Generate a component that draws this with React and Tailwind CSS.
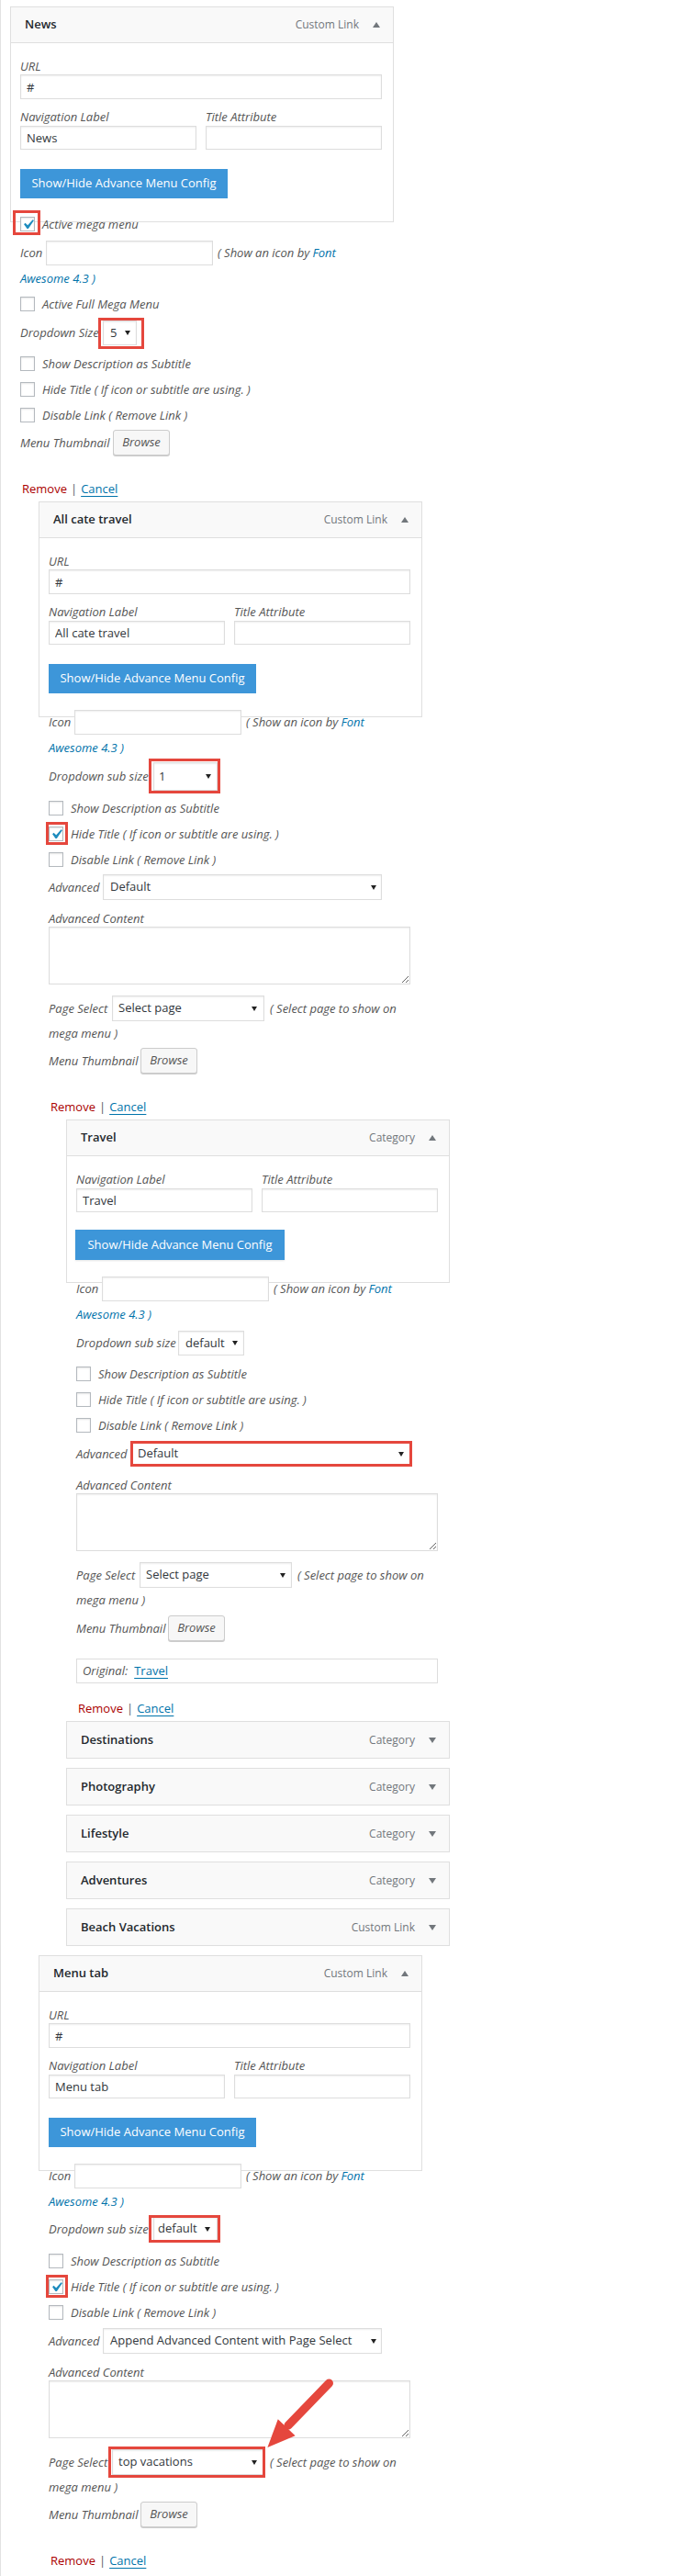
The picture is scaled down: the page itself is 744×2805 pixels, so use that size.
import React from "react";

const L = "italic text-[13px] leading-[17px] text-[#555] whitespace-nowrap";
const BLUE = "italic text-[13px] leading-[17px] text-[#0073aa] whitespace-nowrap";

function TriUp() {
  return (
    <svg width="8" height="6" viewBox="0 0 8 6" className="ml-[15px] shrink-0">
      <polygon points="0,6 4,0 8,6" fill="#72777c" />
    </svg>
  );
}
function TriDown() {
  return (
    <svg width="8" height="6" viewBox="0 0 8 6" className="ml-[15px] shrink-0">
      <polygon points="0,0 8,0 4,6" fill="#72777c" />
    </svg>
  );
}
function SelArrow() {
  return (
    <svg width="6" height="5" viewBox="0 0 6 5" className="shrink-0">
      <polygon points="0,0 6,0 3,5" fill="#222" />
    </svg>
  );
}

function Header({ title, type, open }) {
  return (
    <div
      className={
        open
          ? "h-[39px] flex items-center justify-between bg-[#f9f9f9] pl-[15px] pr-[14px] border-b border-[#dfdfdf]"
          : "h-[39px] flex items-center justify-between bg-[#f9f9f9] pl-[15px] pr-[14px]"
      }
    >
      <span className="text-[13px] font-semibold text-[#23282d]">{title}</span>
      <div className="flex items-center">
        <span className="text-[12px] text-[#72777c]">{type}</span>
        {open ? <TriUp /> : <TriDown />}
      </div>
    </div>
  );
}

function TextInput({ value, cls }) {
  return (
    <input
      readOnly
      value={value}
      className={
        "block border border-[#ddd] bg-white px-[6px] text-[13px] text-[#32373c] shadow-[inset_0_1px_2px_rgba(0,0,0,0.07)] outline-none " +
        cls
      }
    />
  );
}

function Select({ value, cls, children }) {
  return (
    <div
      className={
        "relative flex items-center justify-between border border-[#ddd] bg-white shadow-[inset_0_1px_2px_rgba(0,0,0,0.07)] text-[13px] text-[#32373c] whitespace-nowrap " +
        cls
      }
    >
      <span>{value}</span>
      <SelArrow />
      {children}
    </div>
  );
}

function Red({ pos }) {
  return <span className={"absolute border-[3px] border-[#e5473d] pointer-events-none " + pos} />;
}

function Check({ checked, hl }) {
  return (
    <span className="relative inline-block w-[16px] h-[16px] shrink-0 border border-[#b4b9be] bg-white shadow-[inset_0_1px_2px_rgba(0,0,0,0.1)]">
      {checked && (
        <svg className="absolute -left-[3px] -top-[3px]" width="21" height="21" viewBox="0 0 20 20">
          <path fill="#1e8cbe" d="M14.83 4.89l1.34.94-5.81 8.38H9.02L5.78 9.67l1.34-1.25 2.57 2.4z" />
        </svg>
      )}
      {hl && <Red pos={hl} />}
    </span>
  );
}

function CheckRow({ cls, checked, hl, children }) {
  return (
    <div className={"h-[16px] flex items-center " + cls}>
      <Check checked={checked} hl={hl} />
      <span className={L + " ml-[8px]"}>{children}</span>
    </div>
  );
}

function Browse() {
  return (
    <div className="w-[62px] h-[28px] flex items-center justify-center border border-[#ccc] bg-[#f7f7f7] shadow-[0_1px_0_#ccc] rounded-[3px] italic text-[13px] text-[#555]">
      Browse
    </div>
  );
}

function OpenBox({ title, type }) {
  return (
    <div className="w-[418px] border border-[#dfdfdf] bg-white">
      <Header title={title} type={type} open />
      <div className="pl-[10px] pr-[12px] pt-[17px] pb-[25px]">
        <div className={L}>URL</div>
        <TextInput value="#" cls="w-full h-[27px]" />
        <div className="mt-[11px] grid grid-cols-2 gap-x-[10px]">
          <div className={L}>Navigation Label</div>
          <div className={L}>Title Attribute</div>
          <TextInput value={title} cls="mt-[1px] w-full h-[26px]" />
          <TextInput value="" cls="mt-[1px] w-full h-[26px]" />
        </div>
        <button className="block mt-[21px] w-[226px] h-[32px] bg-[#3d96d9] text-white text-[13px]">
          Show/Hide Advance Menu Config
        </button>
      </div>
    </div>
  );
}

function ClosedBox({ title, type, cls }) {
  return (
    <div className={"w-[418px] border border-[#dfdfdf] " + cls}>
      <Header title={title} type={type} />
    </div>
  );
}

function IconRows({ cls }) {
  return (
    <>
      <div className={"h-[27px] flex items-center " + cls}>
        <span className={L + " w-[28px]"}>Icon</span>
        <TextInput value="" cls="w-[182px] h-[27px]" />
        <span className={L + " ml-[5px]"}>
          ( Show an icon by <span className="text-[#0073aa]">Font</span>
        </span>
      </div>
      <div className="mt-[1px] h-[27px] flex items-center">
        <span className={BLUE}>Awesome 4.3 )</span>
      </div>
    </>
  );
}

function RemoveRow({ cls }) {
  return (
    <div className={"h-[18px] flex items-center pl-[2px] text-[13px] leading-[18px] " + cls}>
      <span className="text-[#a00]">Remove</span>
      <span className="mx-[4px] text-[#50575e]">|</span>
      <span className="text-[#0073aa] underline underline-offset-[3px]">Cancel</span>
    </div>
  );
}

function AdvancedBlock({ advValue, advCls, advHl, labelW, textarea, pageValue, pageCls, pageHl, pageLabelW }) {
  return null;
}

export default function App() {
  return (
    <div className="relative w-[744px] min-h-[2805px] bg-white border-l border-[#e2e2e2] font-['Open_Sans',sans-serif] pt-[7px] pb-[4px]">
      {/* Section 1: News */}
      <div className="ml-[10px]">
        <OpenBox title="News" type="Custom Link" />
        <div className="pl-[11px]">
          <CheckRow cls="-mt-[6px]" checked hl="-left-[9px] -top-[8px] w-[30px] h-[27px]">
            Active mega menu
          </CheckRow>
          <IconRows cls="mt-[10px]" />
          <CheckRow cls="mt-[6px]">Active Full Mega Menu</CheckRow>
          <div className="mt-[10px] h-[27px] flex items-center">
            <span className={L + " w-[90px]"}>Dropdown Size</span>
            <Select value="5" cls="w-[37px] h-[27px] pl-[7px] pr-[6px]">
              <Red pos="-left-[6px] -top-[4px] w-[50px] h-[34px]" />
            </Select>
          </div>
          <CheckRow cls="mt-[12px]">Show Description as Subtitle</CheckRow>
          <CheckRow cls="mt-[12px]">Hide Title ( If icon or subtitle are using. )</CheckRow>
          <CheckRow cls="mt-[12px]">Disable Link ( Remove Link )</CheckRow>
          <div className="mt-[8px] h-[28px] flex items-center">
            <span className={L + " w-[101px]"}>Menu Thumbnail</span>
            <Browse />
          </div>
          <RemoveRow cls="mt-[27px]" />
        </div>
      </div>

      {/* Section 2: All cate travel */}
      <div className="ml-[41px] mt-[5px]">
        <OpenBox title="All cate travel" type="Custom Link" />
        <div className="pl-[11px]">
          <IconRows cls="-mt-[8px]" />
          <div className="mt-[2px] h-[31px] flex items-center">
            <span className={L + " w-[114px]"}>Dropdown sub size</span>
            <Select value="1" cls="w-[70px] h-[31px] pl-[5px] pr-[6px]">
              <Red pos="-left-[6px] -top-[5px] w-[78px] h-[38px]" />
            </Select>
          </div>
          <CheckRow cls="mt-[11px]">Show Description as Subtitle</CheckRow>
          <CheckRow cls="mt-[12px]" checked hl="-left-[4px] -top-[6px] w-[24px] h-[25px]">
            Hide Title ( If icon or subtitle are using. )
          </CheckRow>
          <CheckRow cls="mt-[12px]">Disable Link ( Remove Link )</CheckRow>
          <div className="mt-[8px] h-[28px] flex items-center">
            <span className={L + " w-[59px]"}>Advanced</span>
            <Select value="Default" cls="w-[304px] h-[28px] pl-[7px] pr-[5px]" />
          </div>
          <div className={L + " mt-[12px]"}>Advanced Content</div>
          <textarea readOnly className="block w-[394px] h-[63px] border border-[#ddd] bg-white shadow-[inset_0_1px_2px_rgba(0,0,0,0.07)] outline-none" />
          <div className="mt-[12px] h-[28px] flex items-center">
            <span className={L + " w-[69px]"}>Page Select</span>
            <Select value="Select page" cls="w-[166px] h-[28px] pl-[6px] pr-[7px]" />
            <span className={L + " ml-[6px]"}>( Select page to show on</span>
          </div>
          <div className="h-[27px] flex items-center">
            <span className={L}>mega menu )</span>
          </div>
          <div className="mt-[2px] h-[28px] flex items-center">
            <span className={L + " w-[100px]"}>Menu Thumbnail</span>
            <Browse />
          </div>
          <RemoveRow cls="mt-[27px]" />
        </div>
      </div>

      {/* Section 3: Travel */}
      <div className="ml-[71px] mt-[5px]">
        <div className="w-[418px] border border-[#dfdfdf] bg-white">
          <Header title="Travel" type="Category" open />
          <div className="pl-[10px] pr-[12px] pt-[17px] pb-[24px]">
            <div className="grid grid-cols-2 gap-x-[10px]">
              <div className={L}>Navigation Label</div>
              <div className={L}>Title Attribute</div>
              <TextInput value="Travel" cls="mt-[1px] w-full h-[26px]" />
              <TextInput value="" cls="mt-[1px] w-full h-[26px]" />
            </div>
            <button className="block mt-[19px] -ml-[1px] w-[228px] h-[33px] bg-[#3d96d9] text-white text-[13px] shadow-[0_1px_2px_rgba(0,0,0,0.1)]">
              Show/Hide Advance Menu Config
            </button>
          </div>
        </div>
        <div className="pl-[11px]">
          <IconRows cls="-mt-[7px]" />
          <div className="mt-[4px] h-[27px] flex items-center">
            <span className={L + " w-[111px]"}>Dropdown sub size</span>
            <Select value="default" cls="w-[72px] h-[27px] pl-[7px] pr-[6px]" />
          </div>
          <CheckRow cls="mt-[12px]">Show Description as Subtitle</CheckRow>
          <CheckRow cls="mt-[12px]">Hide Title ( If icon or subtitle are using. )</CheckRow>
          <CheckRow cls="mt-[12px]">Disable Link ( Remove Link )</CheckRow>
          <div className="mt-[9px] h-[28px] flex items-center">
            <span className={L + " w-[60px]"}>Advanced</span>
            <Select value="Default" cls="w-[304px] h-[28px] pl-[6px] pr-[6px]">
              <Red pos="-left-[2px] -top-[1px] w-[307px] h-[28px]" />
            </Select>
          </div>
          <div className={L + " mt-[12px]"}>Advanced Content</div>
          <textarea readOnly className="block w-[394px] h-[63px] border border-[#ddd] bg-white shadow-[inset_0_1px_2px_rgba(0,0,0,0.07)] outline-none" />
          <div className="mt-[12px] h-[28px] flex items-center">
            <span className={L + " w-[69px]"}>Page Select</span>
            <Select value="Select page" cls="w-[166px] h-[28px] pl-[6px] pr-[6px]" />
            <span className={L + " ml-[6px]"}>( Select page to show on</span>
          </div>
          <div className="h-[27px] flex items-center">
            <span className={L}>mega menu )</span>
          </div>
          <div className="mt-[3px] h-[28px] flex items-center">
            <span className={L + " w-[100px]"}>Menu Thumbnail</span>
            <Browse />
          </div>
          <div className="mt-[19px] w-[394px] h-[27px] border border-[#ddd] flex items-center pl-[6px] text-[13px]">
            <span className="italic text-[#555]">Original:</span>
            <span className="ml-[7px] text-[#0073aa] underline underline-offset-[3px]">Travel</span>
          </div>
          <RemoveRow cls="mt-[18px]" />
        </div>
        <ClosedBox title="Destinations" type="Category" cls="mt-[5px] bg-[#f9f9f9]" />
        <ClosedBox title="Photography" type="Category" cls="mt-[10px] bg-[#f9f9f9]" />
        <ClosedBox title="Lifestyle" type="Category" cls="mt-[10px] bg-[#f9f9f9]" />
        <ClosedBox title="Adventures" type="Category" cls="mt-[10px] bg-[#f9f9f9]" />
        <ClosedBox title="Beach Vacations" type="Custom Link" cls="mt-[10px] bg-[#f9f9f9]" />
      </div>

      {/* Section 4: Menu tab */}
      <div className="ml-[41px] mt-[10px]">
        <OpenBox title="Menu tab" type="Custom Link" />
        <div className="pl-[11px]">
          <IconRows cls="-mt-[8px]" />
          <div className="mt-[3px] h-[26px] flex items-center">
            <span className={L + " w-[114px]"}>Dropdown sub size</span>
            <Select value="default" cls="w-[70px] h-[26px] pl-[4px] pr-[7px]">
              <Red pos="-left-[6px] -top-[3px] w-[78px] h-[30px]" />
            </Select>
          </div>
          <CheckRow cls="mt-[14px]">Show Description as Subtitle</CheckRow>
          <CheckRow cls="mt-[12px]" checked hl="-left-[4px] -top-[6px] w-[24px] h-[25px]">
            Hide Title ( If icon or subtitle are using. )
          </CheckRow>
          <CheckRow cls="mt-[12px]">Disable Link ( Remove Link )</CheckRow>
          <div className="mt-[9px] h-[28px] flex items-center">
            <span className={L + " w-[59px]"}>Advanced</span>
            <Select value="Append Advanced Content with Page Select" cls="w-[304px] h-[28px] pl-[7px] pr-[5px]" />
          </div>
          <div className={L + " mt-[12px]"}>Advanced Content</div>
          <textarea readOnly className="block w-[394px] h-[63px] border border-[#ddd] bg-white shadow-[inset_0_1px_2px_rgba(0,0,0,0.07)] outline-none" />
          <div className="mt-[12px] h-[28px] flex items-center">
            <span className={L + " w-[69px]"}>Page Select</span>
            <Select value="top vacations" cls="w-[166px] h-[28px] pl-[6px] pr-[7px]">
              <Red pos="-left-[5px] -top-[4px] w-[171px] h-[34px]" />
            </Select>
            <span className={L + " ml-[6px]"}>( Select page to show on</span>
          </div>
          <div className="h-[27px] flex items-center">
            <span className={L}>mega menu )</span>
          </div>
          <div className="mt-[2px] h-[28px] flex items-center">
            <span className={L + " w-[100px]"}>Menu Thumbnail</span>
            <Browse />
          </div>
          <RemoveRow cls="mt-[27px]" />
        </div>
      </div>

      {/* Annotation arrow */}
      <svg className="absolute left-[280px] top-[2585px] pointer-events-none" width="90" height="90" viewBox="0 0 90 90">
        <line x1="77.5" y1="10" x2="33" y2="56" stroke="#e5473d" strokeWidth="9" strokeLinecap="round" />
        <polygon points="10.4,80 40.6,67.3 21.8,49.3" fill="#e5473d" />
      </svg>
    </div>
  );
}
